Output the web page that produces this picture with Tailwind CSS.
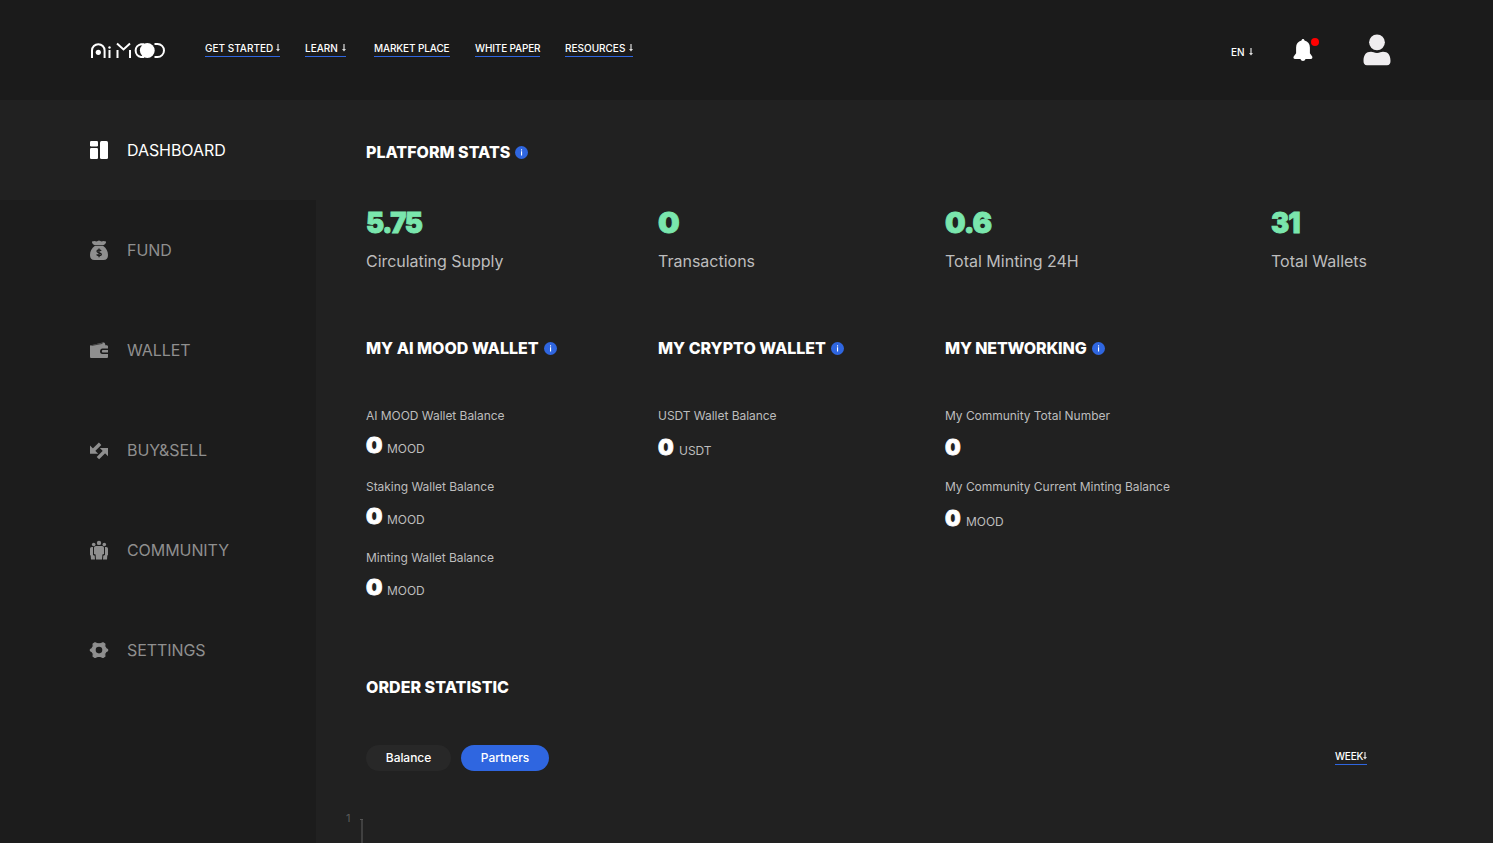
<!DOCTYPE html>
<html lang="en"><head><meta charset="utf-8"><title>Ai MOOD Dashboard</title>
<script src="https://cdn.jsdelivr.net/npm/@tailwindcss/browser@4"></script></head>
<body class="w-[1493px] h-[843px] overflow-hidden bg-[#212121] text-white font-['Inter',sans-serif]">
<svg class="hidden">
<symbol id="down" viewBox="0 0 4 8"><path d="M1.4 0h1.2v5H4L2 7.5 0 5h1.4z" fill="#ddd"/></symbol>
<symbol id="info" viewBox="0 0 13 13"><circle cx="6.5" cy="6.5" r="6.5" fill="#2f66e0"/><path d="M6 3.3h1.1v1.1H6zM6 5.3h1.1v4.3H6z" fill="#fff"/></symbol>
</svg>
<header class="flex h-[100px] bg-[#1b1b1b] pl-[90px]">
<svg class="mt-[42px] h-[17px] w-[76px] shrink-0" viewBox="0 0 76 17" fill="none" stroke="#fff" stroke-width="2"><path d="M2 16V8.500a6.300 6.300 0 0 1 12.600 0V16M19.500 8v8M27.500 8v8M27 1.500l6.500 6 6.500-6M40 8v8"/><circle cx="8.300" cy="10.300" r="2.600" fill="#fff" stroke="none"/><circle cx="19.500" cy="5.500" r="1.200" fill="#fff" stroke="none"/><path d="M54 2.200h-3a6.500 6.500 0 0 0 0 12.800h3M64.500 2h3a6.500 6.500 0 0 1 0 13h-3"/><circle cx="57.300" cy="8.500" r="7.400" fill="#fff" stroke="none"/></svg>
<nav class="ml-[39px] mt-[41px] flex text-[10px] leading-[14px] font-medium">
<a class="mr-[25px] flex h-4 w-[75px] justify-between border-b border-[#2f66e0] whitespace-nowrap">GET STARTED<svg class="mt-[3px] h-2 w-1"><use href="#down"/></svg></a>
<a class="mr-7 flex h-4 w-[41px] justify-between border-b border-[#2f66e0] whitespace-nowrap">LEARN<svg class="mt-[3px] h-2 w-1"><use href="#down"/></svg></a>
<a class="mr-[25px] h-4 w-[76px] border-b border-[#2f66e0] tracking-[-0.120px] whitespace-nowrap">MARKET PLACE</a>
<a class="mr-[25px] h-4 w-[65px] border-b border-[#2f66e0] tracking-[-0.150px] whitespace-nowrap">WHITE PAPER</a>
<a class="flex h-4 w-[68px] justify-between border-b border-[#2f66e0] whitespace-nowrap">RESOURCES<svg class="mt-[3px] h-2 w-1"><use href="#down"/></svg></a>
</nav>
<div class="ml-[598px] mt-[45px] flex h-[14px] w-[22px] justify-between text-[10px] leading-[14px] font-medium">EN<svg class="mt-[3px] h-2 w-1"><use href="#down"/></svg></div>
<svg class="ml-10 mt-[38px] h-6 w-[27px]" viewBox="0 0 27 24"><path fill="#fff" d="M8.500 2.600C8.500.4 11.500.4 11.500 2.600c3.500.8 5.400 3.500 5.400 7v5.600l2.300 3.200c.6 1-.2 2.600-1.200 2.600h-5.500c-.5 2.600-4.500 2.600-5 0H2c-1.300 0-2-1.500-1.300-2.600L3.100 15.200V9.600c0-3.500 1.900-6.200 5.400-7z"/><circle cx="22" cy="4" r="4" fill="#f00"/></svg>
<svg class="ml-[43px] mt-[34px] h-8 w-7" viewBox="0 0 28 32" fill="#efedef"><circle cx="14" cy="8.300" r="7.900"/><path d="M.5 27c0-6 2.500-9.200 7.500-9.200 2 0 3.200 1.200 6 1.200s4-1.200 6-1.200c5 0 7.500 3.200 7.500 9.200 0 2.500-1 4.200-3.500 4.200H4C1.500 31.200.5 29.500.5 27z"/></svg>
</header>
<div class="flex h-[743px]">
<aside class="w-[316px] bg-[#1c1c1c] text-[16px] tracking-[-0.070px] text-[#8f8f8f]">
<div class="flex h-[100px] items-center gap-[18px] bg-[#212121] pl-[89px] text-white"><svg class="h-5 w-5" viewBox="0 0 20 20" fill="#fff"><rect x="1" y="1" width="8" height="5.500" rx="1.200"/><rect x="1" y="8" width="8" height="11" rx="1.200"/><rect x="11" y="1" width="8" height="18" rx="1.500"/></svg><span>DASHBOARD</span></div>
<div class="flex h-[100px] items-center gap-[18px] pl-[89px]"><svg class="h-5 w-5" viewBox="0 0 20 20" fill="#8f8f8f"><path d="M3 1.500 5.500 1l2 .6L10 .6l2.500 1 2-.6 2.500.5c.3 1.800-1.200 3.200-3 3.700H6C4.200 4.700 2.700 3.300 3 1.500zM5.700 6h8.600c3 2.300 4.700 5.200 4.700 9 0 3.500-1.500 5-4.500 5h-9C2.500 20 1 18.500 1 15c0-3.800 1.700-6.700 4.700-9z"/><path d="M12.200 10.900C10.500 9.300 8 9.800 8 11.300c0 2 4.300 1 4.300 3 0 1.700-3 1.900-4.700.2M10 8.500v8.700" fill="none" stroke="#1c1c1c" stroke-width="1.300"/></svg><span>FUND</span></div>
<div class="flex h-[100px] items-center gap-[18px] pl-[89px]"><svg class="h-5 w-5" viewBox="0 0 20 20" fill="#8f8f8f"><path d="M1 5.500 14 2.600c1.200-.2 2 .5 2.200 1.600l.2 1.100h1.100c1 0 1.500.6 1.500 1.700H1z"/><path d="M1 6h16.500c1 0 1.500.6 1.500 1.500v1h-5.500c-3 0-3.500 5.500 0 5.500H19v2.400c0 1-.5 1.600-1.500 1.600h-15C1.500 18 1 17.400 1 16.400z"/><path d="M14 9.900h5v2.700h-5c-1.500 0-1.500-2.700 0-2.700z"/><path d="m2.500 5.500 11-2.100" stroke="#1c1c1c" stroke-width=".7"/></svg><span>WALLET</span></div>
<div class="flex h-[100px] items-center gap-[18px] pl-[89px]"><svg class="h-5 w-5" viewBox="0 0 20 20" fill="#8f8f8f"><path d="M1 5.600v8.200h8.200zM19 16.200V8h-8.200z"/><path d="m4.500 10.300 6.600-6.600M15.500 11.500l-6.600 6.600" stroke="#8f8f8f" stroke-width="3.400"/></svg><span>BUY&amp;SELL</span></div>
<div class="flex h-[100px] items-center gap-[18px] pl-[89px]"><svg class="h-5 w-5" viewBox="0 0 20 20" fill="#8f8f8f"><circle cx="10" cy="2.900" r="2.200"/><circle cx="4.700" cy="4.500" r="1.800"/><circle cx="15.300" cy="4.500" r="1.800"/><path d="M7 6h6c1.300 0 2 .8 2 2v6l-1.600.5-.4 5H7l-.4-5L5 14V8c0-1.200.7-2 2-2zM2.800 7H4v8l1.700.8.3 3.700H2l-.3-4L1 15V9c0-1.200.6-2 1.800-2zM17.200 7H16v8l-1.700.8-.3 3.700h4l.3-4L19 15V9c0-1.200-.6-2-1.800-2z"/></svg><span>COMMUNITY</span></div>
<div class="flex h-[100px] items-center gap-[18px] pl-[89px]"><svg class="h-5 w-5" viewBox="0 0 20 20"><path d="M6 2.800 8.600 3.800h2.800l2.600-1 1.900 1.200-.2 2.400 1.200 2 1.700 1v1.400l-1.700 1-1.200 2 .2 2.400-1.900 1.200-2.600-1H8.600l-2.600 1-1.900-1.200.2-2.400-1.200-2-1.700-1V9.400l1.700-1 1.200-2L4.100 4z" fill="#8f8f8f" stroke="#8f8f8f" stroke-width="1.200" stroke-linejoin="round"/><circle cx="10" cy="10.100" r="3.300" fill="#1c1c1c"/></svg><span>SETTINGS</span></div>
</aside>
<main class="flex w-[1177px] flex-col pl-[50px] pt-[42px]">
<h2 class="flex h-5 items-center gap-1 text-[16px] font-extrabold"><span class="w-[145px] whitespace-nowrap">PLATFORM STATS</span><svg class="mt-px h-[13px] w-[13px]"><use href="#info"/></svg></h2>
<section class="mt-[40px] grid h-[80px] grid-cols-[292px_287px_326px_auto]">
<div><p class="h-10 origin-left scale-x-[0.94] text-[29px] leading-[42px] font-black tracking-[-1.400px] text-[#7ae6ad] [-webkit-text-stroke:0.9px_#7ae6ad]">5.75</p><p class="mt-[9px] text-[16px] leading-5 tracking-[-0.030px] text-[#bdbdbd]">Circulating Supply</p></div>
<div><p class="h-10 origin-left scale-x-[1.05] text-[29px] leading-[42px] font-black text-[#7ae6ad] [-webkit-text-stroke:0.9px_#7ae6ad]">0</p><p class="mt-[9px] text-[16px] leading-5 text-[#bdbdbd]">Transactions</p></div>
<div><p class="h-10 text-[29px] leading-[42px] font-black tracking-[-1px] text-[#7ae6ad] [-webkit-text-stroke:0.9px_#7ae6ad]">0.6</p><p class="mt-[9px] text-[16px] leading-5 text-[#bdbdbd]">Total Minting 24H</p></div>
<div><p class="h-10 origin-left scale-x-[0.94] text-[29px] leading-[42px] font-black tracking-[-1px] text-[#7ae6ad] [-webkit-text-stroke:0.9px_#7ae6ad]">31</p><p class="mt-[9px] text-[16px] leading-5 text-[#bdbdbd]">Total Wallets</p></div>
</section>
<section class="mt-[56px] grid h-[339px] grid-cols-[292px_287px_326px] tracking-[-0.040px]">
<div><h2 class="mb-[48px] flex h-5 items-center text-[16px] font-extrabold tracking-[0px] whitespace-nowrap"><span class="w-[178px]">MY AI MOOD WALLET</span><svg class="mt-px h-[13px] w-[13px]"><use href="#info"/></svg></h2>
<div class="h-[71px] text-[12px] text-[#bdbdbd]"><p class="leading-5">AI MOOD Wallet Balance</p><p class="-mt-px flex h-10 items-baseline leading-10"><b class="w-[21px] origin-left scale-x-[1.05] text-[22px] font-black text-white [-webkit-text-stroke:0.8px_white]">0</b>MOOD</p></div>
<div class="h-[71px] text-[12px] text-[#bdbdbd]"><p class="leading-5">Staking Wallet Balance</p><p class="-mt-px flex h-10 items-baseline leading-10"><b class="w-[21px] origin-left scale-x-[1.05] text-[22px] font-black text-white [-webkit-text-stroke:0.8px_white]">0</b>MOOD</p></div>
<div class="h-[71px] text-[12px] text-[#bdbdbd]"><p class="leading-5">Minting Wallet Balance</p><p class="-mt-px flex h-10 items-baseline leading-10"><b class="w-[21px] origin-left scale-x-[1.05] text-[22px] font-black text-white [-webkit-text-stroke:0.8px_white]">0</b>MOOD</p></div></div>
<div><h2 class="mb-[48px] flex h-5 items-center text-[16px] font-extrabold tracking-[0px] whitespace-nowrap"><span class="w-[173px]">MY CRYPTO WALLET</span><svg class="mt-px h-[13px] w-[13px]"><use href="#info"/></svg></h2>
<div class="text-[12px] text-[#bdbdbd]"><p class="leading-5">USDT Wallet Balance</p><p class="mt-px flex items-baseline leading-10"><b class="w-[21px] text-[22px] font-black text-white [-webkit-text-stroke:0.8px_white]">0</b>USDT</p></div></div>
<div><h2 class="mb-[48px] flex h-5 items-center text-[16px] font-extrabold tracking-[-0.150px] whitespace-nowrap"><span class="w-[147px]">MY NETWORKING</span><svg class="mt-px h-[13px] w-[13px]"><use href="#info"/></svg></h2>
<div class="h-[71px] text-[12px] text-[#bdbdbd]"><p class="leading-5">My Community Total Number</p><p class="mt-px flex items-baseline leading-10"><b class="text-[22px] font-black text-white [-webkit-text-stroke:0.8px_white]">0</b></p></div>
<div class="text-[12px] text-[#bdbdbd]"><p class="leading-5">My Community Current Minting Balance</p><p class="mt-px flex items-baseline leading-10"><b class="w-[21px] text-[22px] font-black text-white [-webkit-text-stroke:0.8px_white]">0</b>MOOD</p></div></div>
</section>
<h2 class="h-5 text-[16px] leading-5 font-extrabold tracking-[0.040px]">ORDER STATISTIC</h2>
<div class="mt-[48px] flex h-[26px] text-[12px] font-medium"><button class="w-[85px] rounded-full bg-[#282828] tracking-[-0.050px]">Balance</button><button class="ml-[10px] w-[88px] rounded-full bg-[#2f66e0] tracking-[-0.050px]">Partners</button><div class="ml-[786px] mt-1 flex h-4 w-8 border-b border-[#2f66e0] text-[10px] leading-[14px] tracking-[-0.200px]">WEEK<svg class="mt-[3px] h-2 w-1 shrink-0"><use href="#down"/></svg></div></div>
<div class="-ml-5 mt-[39px] flex text-[11px] leading-4 text-[#5a5a5a]"><span class="w-[14px]">1</span><svg class="mt-[9px] h-6 w-[3px]" viewBox="0 0 3 24"><path d="M0 .5h3M2 0v24" stroke="#555" stroke-width="1.200" fill="none"/></svg></div>
</main></div>
</body></html>
